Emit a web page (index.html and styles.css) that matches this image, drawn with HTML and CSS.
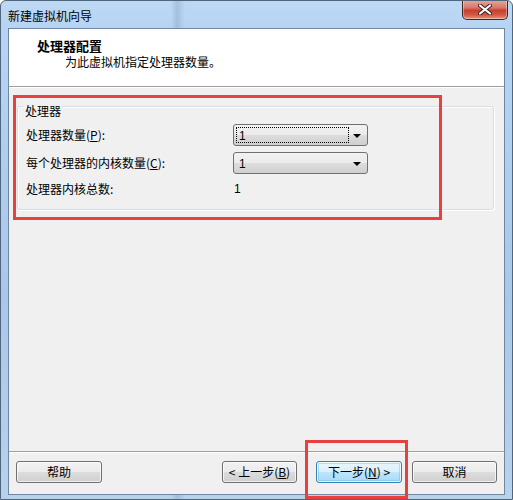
FILE: index.html
```html
<!DOCTYPE html>
<html lang="zh-CN">
<head>
<meta charset="utf-8">
<title>新建虚拟机向导</title>
<link rel="stylesheet" href="styles.css">
</head>
<body>
<div class="window">
  <div class="titlebar">
    <span class="title">新建虚拟机向导</span>
    <button class="close" aria-label="关闭">
      <svg width="14" height="11" viewBox="0 0 14 11">
        <path d="M2 1.5 L12 9.5 M12 1.5 L2 9.5" stroke="#3b2020" stroke-width="4" stroke-linecap="round"/>
        <path d="M2 1.5 L12 9.5 M12 1.5 L2 9.5" stroke="#ffffff" stroke-width="2.2" stroke-linecap="round"/>
      </svg>
    </button>
  </div>

  <div class="client">
    <div class="header">
      <div class="h-title">处理器配置</div>
      <div class="h-sub">为此虚拟机指定处理器数量。</div>
    </div>

    <div class="body">
      <fieldset class="group">
        <legend>处理器</legend>
        <div class="grid">
          <label class="lbl">处理器数量(<u>P</u>):</label>
          <div class="combo"><span class="val focused">1</span><span class="arrow"></span></div>

          <label class="lbl">每个处理器的内核数量(<u>C</u>):</label>
          <div class="combo"><span class="val">1</span><span class="arrow"></span></div>

          <span class="lbl">处理器内核总数:</span>
          <span class="total">1</span>
        </div>
      </fieldset>
    </div>

    <div class="footer">
      <button class="btn btn-help">帮助</button>
      <span class="spacer"></span>
      <button class="btn btn-back">&lt; 上一步(<u>B</u>)</button>
      <button class="btn btn-next">下一步(<u>N</u>) &gt;</button>
      <button class="btn btn-cancel">取消</button>
    </div>
  </div>

  <div class="mark mark-group"></div>
  <div class="mark mark-next"></div>
</div>
</body>
</html>
```

FILE: styles.css
```css
* { box-sizing: border-box; }

html, body {
  margin: 0;
  padding: 0;
  background: #ffffff;
}

body {
  font-family: "Noto Sans CJK SC", "Liberation Sans", sans-serif;
  font-size: 12px;
  color: #000;
}

/* Aero-style window frame */
.window {
  position: relative;
  width: 513px;
  height: 500px;
  padding: 0 7px 4px;
  display: flex;
  flex-direction: column;
  background:
    linear-gradient(90deg, rgba(255,255,255,0) 0, rgba(255,255,255,0) 170px, rgba(120,150,180,0.35) 176px, rgba(255,255,255,0) 184px, rgba(255,255,255,0) 100%),
    linear-gradient(180deg, #bcd8f3 0, #b6d4f3 30px, #a9c8e8 60%, #b7d2ec 100%);
  border: 1px solid #51657c;
  border-radius: 6px 6px 0 0;
  overflow: hidden;
}

.titlebar {
  height: 27px;
  display: flex;
  align-items: center;
  justify-content: space-between;
  flex-shrink: 0;
}

.title {
  font-size: 12px;
  line-height: 14px;
  margin-top: 2px;
  color: #000;
}

.close {
  align-self: flex-start;
  margin: -1px -3px 0 0;
  width: 46px;
  height: 20px;
  padding: 0;
  display: flex;
  align-items: center;
  justify-content: center;
  border: 1px solid #4a2520;
  border-top: none;
  border-radius: 0 0 5px 5px;
  background: linear-gradient(180deg, #e9a99b 0, #d8786a 40%, #c5402f 55%, #d35a45 80%, #e59a80 100%);
  box-shadow: inset 0 0 0 1px rgba(255,255,255,0.35);
}

/* Client area */
.client {
  flex: 1;
  display: flex;
  flex-direction: column;
  background: #f0f0f0;
  border: 1px solid #6f87a0;
}

.header {
  height: 58px;
  flex-shrink: 0;
  background: #ffffff;
  border-bottom: 1px solid #a0a0a0;
  padding: 9px 0 0 28px;
}

.h-title {
  font-weight: bold;
  font-size: 13px;
  line-height: 16px;
}

.h-sub {
  line-height: 16px;
  margin-left: 28px;
}

.body {
  flex: 1;
  padding: 6px 10px 0 8px;
  border-top: 1px solid #ffffff;
}

.group {
  margin: 0;
  padding: 6px 8px 11px 8px;
  border: 1px solid #d5dfe5;
  border-radius: 3px;
  box-shadow: inset 1px 1px 0 #ffffff, 1px 1px 0 #ffffff;
}

.group legend {
  padding: 10px 1px 0 1px;
  margin-left: -2px;
  line-height: 14px;
}

.grid {
  display: grid;
  grid-template-columns: 207px 135px;
  grid-template-rows: 22px 22px 18px;
  row-gap: 6px;
  align-items: center;
}

.lbl {
  line-height: 14px;
}

.combo {
  height: 22px;
  display: flex;
  align-items: center;
  justify-content: space-between;
  padding: 2px 6px 2px 2px;
  border: 1px solid #707070;
  border-radius: 3px;
  background: linear-gradient(180deg, #f2f2f2 0, #ebebeb 50%, #dddddd 51%, #cfcfcf 100%);
}

.val {
  flex: 0 0 113px;
  height: 16px;
  line-height: 16px;
  padding-left: 2px;
  font-family: "Liberation Sans", sans-serif;
  font-size: 12px;
  border: 1px solid transparent;
}

.val.focused {
  border: 1px dotted #000;
}

.arrow {
  width: 0;
  height: 0;
  margin-top: 2px;
  border-left: 4px solid transparent;
  border-right: 4px solid transparent;
  border-top: 4px solid #000;
}

.total {
  padding-left: 1px;
  font-family: "Liberation Sans", sans-serif;
  line-height: 14px;
}

/* Bottom button strip */
.footer {
  height: 43px;
  flex-shrink: 0;
  display: flex;
  align-items: flex-start;
  padding: 9px 7px 0 7px;
  border-top: 1px solid #a0a0a0;
  box-shadow: inset 0 1px 0 #ffffff;
}

.spacer { flex: 1; }

.btn {
  height: 22px;
  padding: 0;
  font-family: "Noto Sans CJK SC", "Liberation Sans", sans-serif;
  font-size: 12px;
  line-height: 14px;
  color: #000;
  border: 1px solid #707070;
  border-radius: 3px;
  background: linear-gradient(180deg, #f2f2f2 0, #ebebeb 50%, #dddddd 51%, #cfcfcf 100%);
  box-shadow: inset 0 0 0 1px rgba(255,255,255,0.7);
}

.btn-help { width: 86px; }
.btn-back { width: 75px; margin-right: 19px; }
.btn-next {
  width: 86px;
  margin-right: 10px;
  border-color: #3c7fb1;
  background: linear-gradient(180deg, #eaf6fd 0, #d9f0fc 50%, #bee6fd 51%, #a7d9f5 100%);
  box-shadow: inset 0 0 0 1px rgba(255,255,255,0.8), inset 0 0 0 2px rgba(80,180,230,0.35);
}
.btn-cancel { width: 85px; }

/* Red highlight frames drawn over the dialog */
.mark {
  position: absolute;
  border: 3px solid #e8403f;
  pointer-events: none;
}

.mark-group {
  left: 12px;
  top: 94px;
  width: 429px;
  height: 125px;
}

.mark-next {
  left: 304px;
  top: 439px;
  width: 103px;
  height: 59px;
}
```
